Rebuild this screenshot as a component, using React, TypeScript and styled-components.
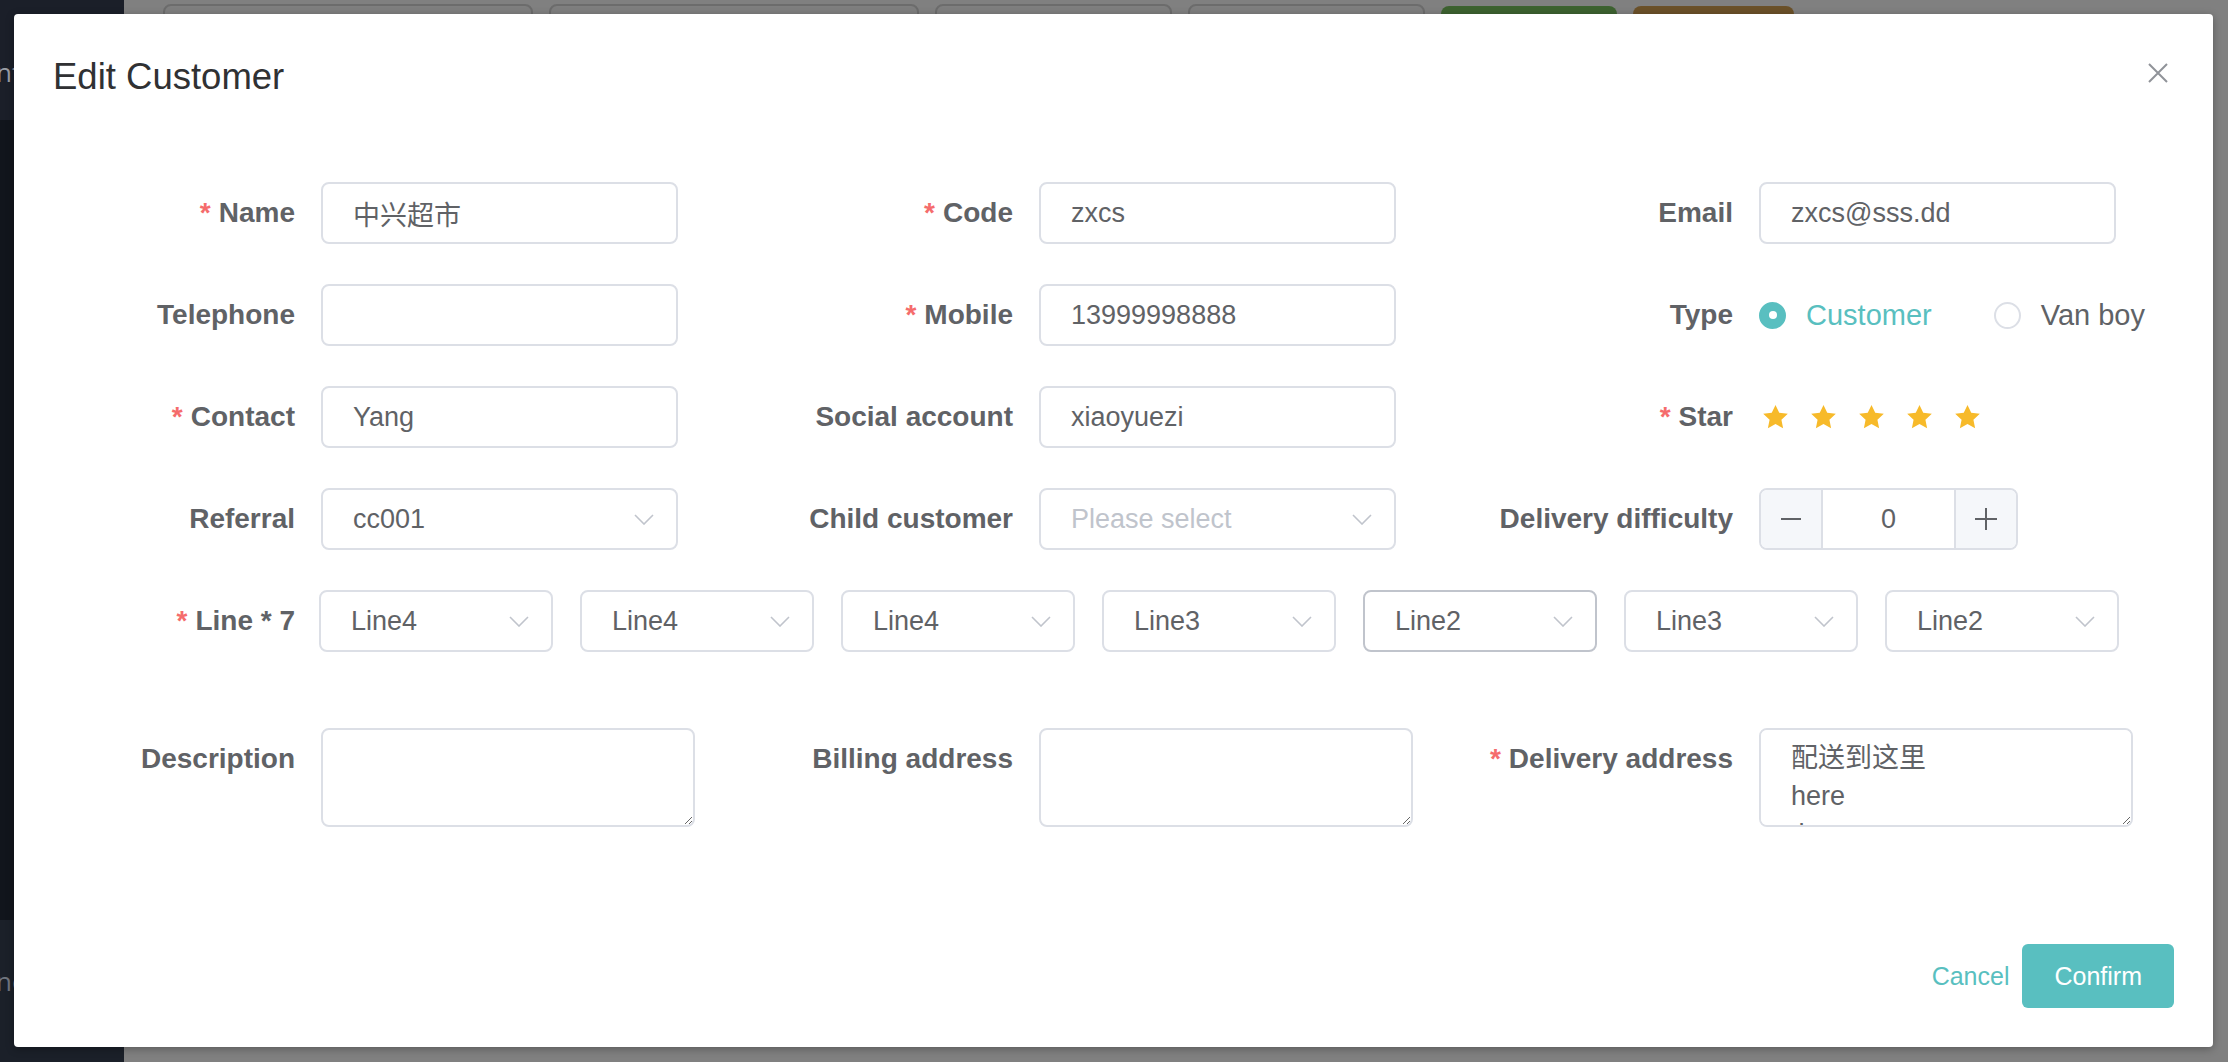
import React from "react";
import styled, { createGlobalStyle } from "styled-components";

const TEAL = "#59bfc0";
const TEXT = "#606266";
const BORDER = "#dcdfe6";

const GlobalStyle = createGlobalStyle`
  html, body { margin: 0; padding: 0; width: 2228px; height: 1062px; overflow: hidden; }
  body { font-family: "Liberation Sans", "Noto Sans CJK SC", sans-serif; }
  *, *::before, *::after { box-sizing: border-box; }
`;

/* ---------- background page (dimmed by the modal mask) ---------- */
const Page = styled.div`
  position: relative;
  display: flex;
  width: 2228px;
  height: 1062px;
  background: #808080;
  overflow: hidden;
`;

const Sidebar = styled.aside`
  flex: none;
  width: 124px;
  display: flex;
  flex-direction: column;
  background: #11151c;
`;

const SideHead = styled.div`
  height: 120px;
  padding-top: 52px;
  background: #1b1f29;
`;

const SideMenu = styled.div`
  flex: 1;
`;

const SideFoot = styled.div`
  height: 142px;
  padding-top: 41px;
  background: #1b2029;
`;

const SideText = styled.span<{ $tone: string }>`
  display: block;
  margin-left: -4px;
  font-family: "Open Sans", sans-serif;
  font-size: 26px;
  line-height: 40px;
  color: ${(p) => p.$tone};
  white-space: nowrap;
`;

const MainArea = styled.main`
  flex: 1;
  padding: 4px 0 0 39px;
`;

const Toolbar = styled.div`
  display: flex;
  align-items: flex-start;
  gap: 16px;
`;

const GhostButton = styled.div<{ $w: number }>`
  width: ${(p) => p.$w}px;
  height: 60px;
  border: 2px solid #6c6c6c;
  border-radius: 8px;
  background: #7f7f7f;
`;

const FillButton = styled.div<{ $w: number; $bg: string }>`
  width: ${(p) => p.$w}px;
  height: 58px;
  margin-top: 2px;
  border-radius: 8px;
  background: ${(p) => p.$bg};
`;

/* ---------- dialog ---------- */
const Dialog = styled.section`
  position: absolute;
  left: 14px;
  top: 14px;
  width: 2199px;
  height: 1033px;
  display: flex;
  flex-direction: column;
  background: #fff;
  border-radius: 4px;
  box-shadow: 0 2px 8px rgba(0, 0, 0, 0.3);
`;

const Header = styled.header`
  position: relative;
  padding: 39px 39px 20px;
`;

const Title = styled.h2`
  margin: 0;
  font-size: 36.5px;
  font-weight: 400;
  line-height: 48px;
  color: #303133;
`;

const CloseButton = styled.button`
  position: absolute;
  top: 49px;
  right: 45px;
  width: 20px;
  height: 20px;
  padding: 0;
  border: 0;
  background: none;
  display: flex;
`;

const Body = styled.div`
  padding: 61px 39px 0;
  display: flex;
  flex-direction: column;
  gap: 40px;
`;

const FormRow = styled.div<{ $after?: number }>`
  display: grid;
  grid-template-columns: repeat(3, 707px);
  align-items: start;
  margin-bottom: ${(p) => p.$after ?? 0}px;
`;

const FormItem = styled.div<{ $span?: boolean }>`
  display: flex;
  align-items: flex-start;
  grid-column: ${(p) => (p.$span ? "1 / -1" : "auto")};
`;

const Label = styled.label<{ $w: number }>`
  flex: none;
  width: ${(p) => p.$w}px;
  padding-right: 26px;
  text-align: right;
  font-size: 28px;
  font-weight: 700;
  line-height: 62px;
  color: ${TEXT};
  white-space: nowrap;
`;

const Req = styled.span`
  color: #f56c6c;
  margin-right: 8px;
`;

const TextInput = styled.input`
  width: 357px;
  height: 62px;
  padding: 0 29px 0 30px;
  border: 2px solid ${BORDER};
  border-radius: 8px;
  background: #fff;
  font-family: inherit;
  font-size: 27px;
  color: ${TEXT};
  outline: none;
  appearance: none;
`;

const TextArea = styled.textarea`
  display: block;
  width: 374px;
  height: 99px;
  padding: 9px 29px 9px 30px;
  border: 2px solid ${BORDER};
  border-radius: 8px;
  background: #fff;
  font-family: inherit;
  font-size: 27px;
  line-height: 38px;
  color: ${TEXT};
  outline: none;
  resize: vertical;
  scrollbar-width: none;
  &::-webkit-scrollbar {
    display: none;
  }
`;

const SelectBox = styled.div<{ $w: number; $active?: boolean }>`
  flex: none;
  width: ${(p) => p.$w}px;
  height: 62px;
  display: flex;
  align-items: center;
  justify-content: space-between;
  padding: 0 22px 0 30px;
  border: 2px solid ${(p) => (p.$active ? "#c0c4cc" : BORDER)};
  border-radius: 8px;
  background: #fff;
`;

const SelectText = styled.span<{ $placeholder?: boolean }>`
  font-size: 27px;
  color: ${(p) => (p.$placeholder ? "#c0c4cc" : TEXT)};
  white-space: nowrap;
`;

const SelectGroup = styled.div`
  display: flex;
  gap: 27px;
  margin-left: -2px;
`;

const RadioGroup = styled.div`
  display: flex;
  align-items: center;
  height: 62px;
`;

const RadioOption = styled.label<{ $checked?: boolean }>`
  display: inline-flex;
  align-items: center;
  margin-right: 62px;
  font-size: 29px;
  color: ${(p) => (p.$checked ? TEAL : TEXT)};
  white-space: nowrap;
`;

const RadioDot = styled.span<{ $checked?: boolean }>`
  position: relative;
  flex: none;
  width: 27px;
  height: 27px;
  margin-right: 20px;
  border-radius: 50%;
  border: 2px solid ${(p) => (p.$checked ? TEAL : BORDER)};
  background: ${(p) => (p.$checked ? TEAL : "#fff")};
  &::after {
    content: "";
    display: ${(p) => (p.$checked ? "block" : "none")};
    position: absolute;
    left: 50%;
    top: 50%;
    width: 8px;
    height: 8px;
    border-radius: 50%;
    background: #fff;
    transform: translate(-50%, -50%);
  }
`;

const Rate = styled.div`
  display: flex;
  align-items: center;
  gap: 19px;
  height: 62px;
  padding-left: 2px;
`;

const NumberBox = styled.div`
  display: flex;
  width: 259px;
  height: 62px;
  border: 2px solid ${BORDER};
  border-radius: 8px;
  overflow: hidden;
  background: #fff;
`;

const StepButton = styled.span<{ $side: "left" | "right" }>`
  flex: none;
  width: 62px;
  display: flex;
  align-items: center;
  justify-content: center;
  background: #f5f7fa;
  ${(p) => (p.$side === "left" ? "border-right" : "border-left")}: 2px solid ${BORDER};
`;

const NumberValue = styled.span`
  flex: 1;
  text-align: center;
  font-size: 27px;
  line-height: 58px;
  color: ${TEXT};
`;

const Footer = styled.footer`
  margin-top: auto;
  display: flex;
  justify-content: flex-end;
  align-items: center;
  padding: 0 39px 39px;
`;

const TextButton = styled.button`
  margin-right: 13px;
  padding: 0;
  border: 0;
  background: none;
  font-family: inherit;
  font-size: 25px;
  color: ${TEAL};
`;

const PrimaryButton = styled.button`
  height: 64px;
  padding: 0 32px;
  border: 0;
  border-radius: 6px;
  background: ${TEAL};
  font-family: inherit;
  font-size: 25px;
  color: #fff;
`;

/* ---------- icons ---------- */
const Chevron = () => (
  <svg width="20" height="11" viewBox="0 0 20 11" fill="none">
    <polyline points="1,1 10,10 19,1" stroke="#c0c4cc" strokeWidth="1.6" />
  </svg>
);

const Star = () => (
  <svg width="29" height="29" viewBox="0 0 24 24">
    <polygon
      fill="#f7ba2a"
      points="12,1.6 15.1,8.1 22.2,8.9 16.9,13.8 18.3,20.9 12,17.4 5.7,20.9 7.1,13.8 1.8,8.9 8.9,8.1"
    />
  </svg>
);

const CloseIcon = () => (
  <svg width="20" height="20" viewBox="0 0 20 20">
    <path d="M1 1 L19 19 M19 1 L1 19" stroke="#909399" strokeWidth="2" />
  </svg>
);

const MinusIcon = () => (
  <svg width="20" height="20" viewBox="0 0 20 20">
    <path d="M0 10 H20" stroke={TEXT} strokeWidth="2" />
  </svg>
);

const PlusIcon = () => (
  <svg width="22" height="22" viewBox="0 0 22 22">
    <path d="M0 11 H22 M11 0 V22" stroke={TEXT} strokeWidth="2" />
  </svg>
);

/* ---------- helpers ---------- */
const LABEL_W = [268, 279, 292];

const Field: React.FC<{
  col: number;
  label: string;
  required?: boolean;
  children: React.ReactNode;
}> = ({ col, label, required, children }) => (
  <FormItem>
    <Label $w={LABEL_W[col]}>
      {required && <Req>*</Req>}
      {label}
    </Label>
    {children}
  </FormItem>
);

const Select: React.FC<{ w: number; value?: string; placeholder?: string; active?: boolean }> = ({
  w,
  value,
  placeholder,
  active,
}) => (
  <SelectBox $w={w} $active={active}>
    {value ? <SelectText>{value}</SelectText> : <SelectText $placeholder>{placeholder}</SelectText>}
    <Chevron />
  </SelectBox>
);

const lines = [
  { v: "Line4" },
  { v: "Line4" },
  { v: "Line4" },
  { v: "Line3" },
  { v: "Line2", active: true },
  { v: "Line3" },
  { v: "Line2" },
];

export default function App() {
  return (
    <>
      <GlobalStyle />
      <Page>
        <Sidebar>
          <SideHead>
            <SideText $tone="#9a9ea6">nt</SideText>
          </SideHead>
          <SideMenu />
          <SideFoot>
            <SideText $tone="#70757f">ne</SideText>
          </SideFoot>
        </Sidebar>
        <MainArea>
          <Toolbar>
            <GhostButton $w={370} />
            <GhostButton $w={370} />
            <GhostButton $w={237} />
            <GhostButton $w={237} />
            <FillButton $w={176} $bg="#3d6230" />
            <FillButton $w={161} $bg="#6b5129" />
          </Toolbar>
        </MainArea>

        <Dialog>
          <Header>
            <Title>Edit Customer</Title>
            <CloseButton aria-label="Close">
              <CloseIcon />
            </CloseButton>
          </Header>

          <Body>
            <FormRow>
              <Field col={0} label="Name" required>
                <TextInput defaultValue="中兴超市" />
              </Field>
              <Field col={1} label="Code" required>
                <TextInput defaultValue="zxcs" />
              </Field>
              <Field col={2} label="Email">
                <TextInput defaultValue="zxcs@sss.dd" />
              </Field>
            </FormRow>

            <FormRow>
              <Field col={0} label="Telephone">
                <TextInput defaultValue="" />
              </Field>
              <Field col={1} label="Mobile" required>
                <TextInput defaultValue="13999998888" />
              </Field>
              <Field col={2} label="Type">
                <RadioGroup>
                  <RadioOption $checked>
                    <RadioDot $checked />
                    Customer
                  </RadioOption>
                  <RadioOption>
                    <RadioDot />
                    Van boy
                  </RadioOption>
                </RadioGroup>
              </Field>
            </FormRow>

            <FormRow>
              <Field col={0} label="Contact" required>
                <TextInput defaultValue="Yang" />
              </Field>
              <Field col={1} label="Social account">
                <TextInput defaultValue="xiaoyuezi" />
              </Field>
              <Field col={2} label="Star" required>
                <Rate>
                  {[0, 1, 2, 3, 4].map((i) => (
                    <Star key={i} />
                  ))}
                </Rate>
              </Field>
            </FormRow>

            <FormRow>
              <Field col={0} label="Referral">
                <Select w={357} value="cc001" />
              </Field>
              <Field col={1} label="Child customer">
                <Select w={357} placeholder="Please select" />
              </Field>
              <Field col={2} label="Delivery difficulty">
                <NumberBox>
                  <StepButton $side="left">
                    <MinusIcon />
                  </StepButton>
                  <NumberValue>0</NumberValue>
                  <StepButton $side="right">
                    <PlusIcon />
                  </StepButton>
                </NumberBox>
              </Field>
            </FormRow>

            <FormRow $after={36}>
              <FormItem $span>
                <Label $w={LABEL_W[0]}>
                  <Req>*</Req>
                  Line * 7
                </Label>
                <SelectGroup>
                  {lines.map((l, i) => (
                    <Select key={i} w={234} value={l.v} active={l.active} />
                  ))}
                </SelectGroup>
              </FormItem>
            </FormRow>

            <FormRow>
              <Field col={0} label="Description">
                <TextArea defaultValue="" />
              </Field>
              <Field col={1} label="Billing address">
                <TextArea defaultValue="" />
              </Field>
              <Field col={2} label="Delivery address" required>
                <TextArea defaultValue={"配送到这里\nhere\nthat"} />
              </Field>
            </FormRow>
          </Body>

          <Footer>
            <TextButton>Cancel</TextButton>
            <PrimaryButton>Confirm</PrimaryButton>
          </Footer>
        </Dialog>
      </Page>
    </>
  );
}
